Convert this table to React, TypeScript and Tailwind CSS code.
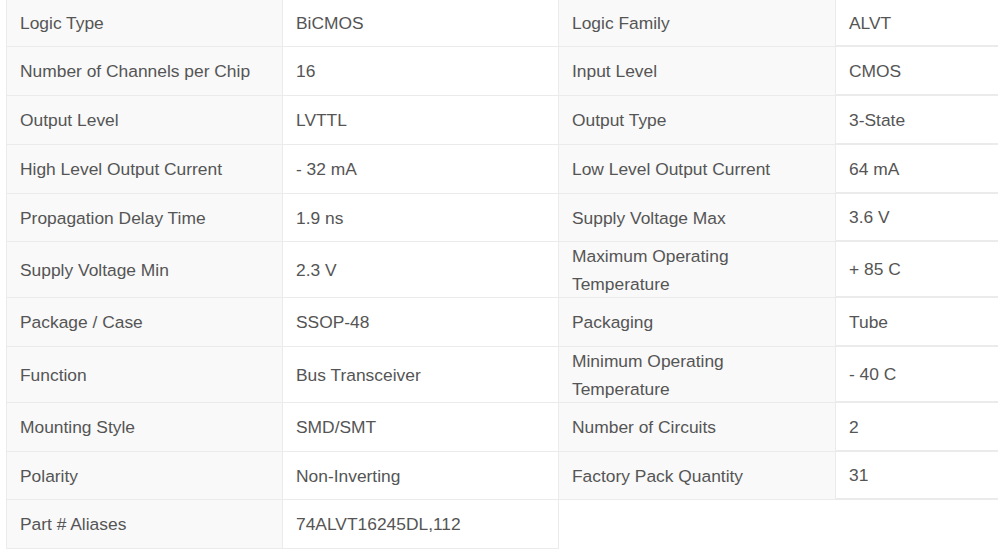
type Row = {
  h: string;
  cells: [string, string] | [string, string, string, string];
};

const rows: Row[] = [
  { h: "h-[47px]", cells: ["Logic Type", "BiCMOS", "Logic Family", "ALVT"] },
  { h: "h-[49px]", cells: ["Number of Channels per Chip", "16", "Input Level", "CMOS"] },
  { h: "h-[49px]", cells: ["Output Level", "LVTTL", "Output Type", "3-State"] },
  { h: "h-[49px]", cells: ["High Level Output Current", "- 32 mA", "Low Level Output Current", "64 mA"] },
  { h: "h-[48px]", cells: ["Propagation Delay Time", "1.9 ns", "Supply Voltage Max", "3.6 V"] },
  { h: "h-[56px]", cells: ["Supply Voltage Min", "2.3 V", "Maximum Operating Temperature", "+ 85 C"] },
  { h: "h-[49px]", cells: ["Package / Case", "SSOP-48", "Packaging", "Tube"] },
  { h: "h-[56px]", cells: ["Function", "Bus Transceiver", "Minimum Operating Temperature", "- 40 C"] },
  { h: "h-[49px]", cells: ["Mounting Style", "SMD/SMT", "Number of Circuits", "2"] },
  { h: "h-[48px]", cells: ["Polarity", "Non-Inverting", "Factory Pack Quantity", "31"] },
  { h: "h-[49px]", cells: ["Part # Aliases", "74ALVT16245DL,112"] },
];

export default function App() {
  return (
    <div
      className="w-[998px] h-[553px] overflow-hidden bg-white text-[17.4px] text-[#555]"
      style={{ fontFamily: '"Liberation Sans", Arial, sans-serif' }}
    >
      <div className="ml-[6px] w-[1110px]">
        {rows.map((r, i) => (
          <div
            key={i}
            className={`grid grid-cols-[276px_277px_276px_281px] grid-rows-[minmax(0,1fr)] ${r.h}`}
          >
            {/* left label */}
            <div className="flex items-center bg-[#f9f9f9] border-l border-b border-[#ebebeb] px-[13px]">
              <span className="leading-[28px]">{r.cells[0]}</span>
            </div>
            {/* left value */}
            <div className="flex items-center bg-white border-l border-r border-b border-[#ebebeb] px-[13px]">
              <span className="leading-[28px]">{r.cells[1]}</span>
            </div>
            {r.cells.length === 4 ? (
              <>
                <div className="flex items-center bg-[#f9f9f9] border-b border-[#ebebeb] px-[13px]">
                  <span className="leading-[28px]">{r.cells[2]}</span>
                </div>
                <div className="flex items-center bg-white border-l border-b-2 border-[#ebebeb] px-[13px]">
                  <span className="leading-[28px]">{r.cells[3]}</span>
                </div>
              </>
            ) : null}
          </div>
        ))}
      </div>
    </div>
  );
}
